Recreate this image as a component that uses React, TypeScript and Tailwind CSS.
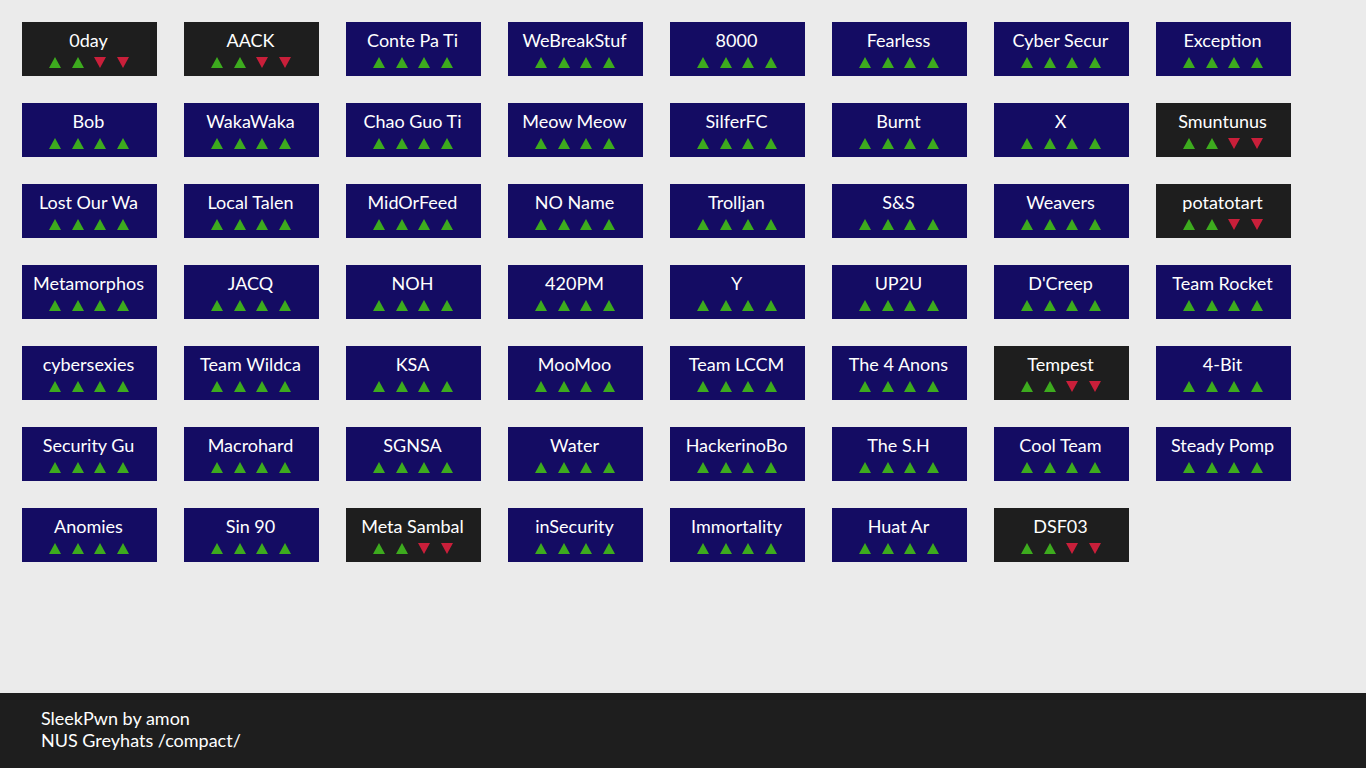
import React from "react";

type Team = { name: string; down?: boolean };

const teams: Team[] = [
  { name: "0day", down: true },
  { name: "AACK", down: true },
  { name: "Conte Pa Ti" },
  { name: "WeBreakStuf" },
  { name: "8000" },
  { name: "Fearless" },
  { name: "Cyber Secur" },
  { name: "Exception" },
  { name: "Bob" },
  { name: "WakaWaka" },
  { name: "Chao Guo Ti" },
  { name: "Meow Meow" },
  { name: "SilferFC" },
  { name: "Burnt" },
  { name: "X" },
  { name: "Smuntunus", down: true },
  { name: "Lost Our Wa" },
  { name: "Local Talen" },
  { name: "MidOrFeed" },
  { name: "NO Name" },
  { name: "Trolljan" },
  { name: "S&S" },
  { name: "Weavers" },
  { name: "potatotart", down: true },
  { name: "Metamorphos" },
  { name: "JACQ" },
  { name: "NOH" },
  { name: "420PM" },
  { name: "Y" },
  { name: "UP2U" },
  { name: "D'Creep" },
  { name: "Team Rocket" },
  { name: "cybersexies" },
  { name: "Team Wildca" },
  { name: "KSA" },
  { name: "MooMoo" },
  { name: "Team LCCM" },
  { name: "The 4 Anons" },
  { name: "Tempest", down: true },
  { name: "4-Bit" },
  { name: "Security Gu" },
  { name: "Macrohard" },
  { name: "SGNSA" },
  { name: "Water" },
  { name: "HackerinoBo" },
  { name: "The S.H" },
  { name: "Cool Team" },
  { name: "Steady Pomp" },
  { name: "Anomies" },
  { name: "Sin 90" },
  { name: "Meta Sambal", down: true },
  { name: "inSecurity" },
  { name: "Immortality" },
  { name: "Huat Ar" },
  { name: "DSF03", down: true },
];

function Up() {
  return (
    <svg width="12" height="11" viewBox="0 0 12 11" className="block">
      <polygon points="6,0 12,11 0,11" fill="#3dab1e" />
    </svg>
  );
}

function Down() {
  return (
    <svg width="12" height="11" viewBox="0 0 12 11" className="block">
      <polygon points="0,0 12,0 6,11" fill="#c91f3a" />
    </svg>
  );
}

function Card({ team }: { team: Team }) {
  return (
    <div
      className={`w-[135px] h-[54px] flex flex-col items-center pt-[7px] ${
        team.down ? "bg-[#1e1e1e]" : "bg-[#140c63]"
      }`}
    >
      <div className="text-[18px] leading-[22px] text-white whitespace-nowrap pr-[2px]">
        {team.name}
      </div>
      <div className="flex gap-[10.5px] mt-[6px] pr-[1px]">
        <Up />
        <Up />
        {team.down ? <Down /> : <Up />}
        {team.down ? <Down /> : <Up />}
      </div>
    </div>
  );
}

export default function App() {
  return (
    <div
      className="min-h-screen flex flex-col bg-[#ebebeb]"
      style={{ fontFamily: "Lato, 'Open Sans', sans-serif" }}
    >
      <main className="flex-1 pl-[22px] pt-[22px]">
        <div className="grid grid-cols-[repeat(8,135px)] gap-[27px]">
          {teams.map((t) => (
            <Card key={t.name} team={t} />
          ))}
        </div>
      </main>
      <footer className="h-[75px] bg-[#1e1e1e] pl-[41px] pt-[14px] text-[18px] leading-[22px] text-white">
        <div>SleekPwn by amon</div>
        <div>NUS Greyhats /compact/</div>
      </footer>
    </div>
  );
}
